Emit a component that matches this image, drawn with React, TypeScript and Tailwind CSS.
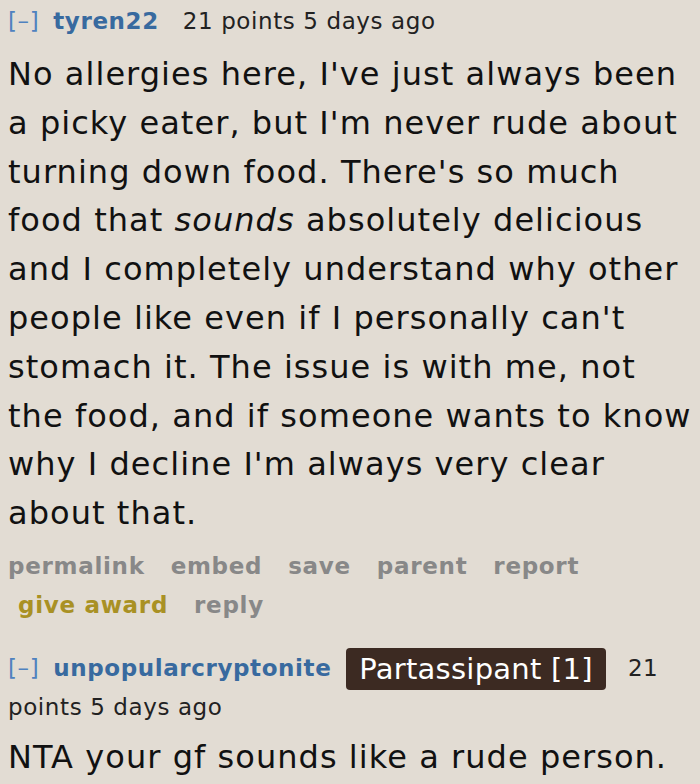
import React from "react";

const font = "font-['Verdana','DejaVu_Sans',sans-serif]";

function Header({ user, flair }: { user: string; flair?: string }) {
  return (
    <div className="text-[23px] leading-[38px] tracking-[0.6px] text-[#222]">
      <span className="text-[#4f82bf] mr-[14px]">[–]</span>
      <span className="font-bold text-[#386a9f] mr-[15px]">{user}</span>
      {flair && (
        <span className="inline-block bg-[#3c2a22] text-white text-[29px] leading-[42px] tracking-[0.25px] px-[13px] rounded-[4px] mr-[22px] align-middle -my-[2px]">
          {flair}
        </span>
      )}
      <span className={flair ? "" : "ml-[9px]"}>21 points 5 days ago</span>
    </div>
  );
}

export default function App() {
  return (
    <div className={`min-h-screen bg-[#e2dcd3] px-[8px] pt-[2px] ${font}`}>
      <Header user="tyren22" />
      <div className="text-[32px] leading-[48.8px] tracking-[1.05px] text-[#111] mt-[10px] -mr-[6px]">
        No allergies here, I've just always been a picky eater, but I'm never rude about turning down food. There's so much food that <em>sounds</em> absolutely delicious and I completely understand why other people like even if I personally can't stomach it. The issue is with me, not the food, and if someone wants to know why I decline I'm always very clear about that.
      </div>
      <div className="flex flex-wrap gap-x-[26px] text-[23px] leading-[39px] tracking-[0.7px] font-bold text-[#888] mt-[9px]">
        <span>permalink</span>
        <span>embed</span>
        <span>save</span>
        <span>parent</span>
        <span>report</span>
        <span className="text-[#a99124] ml-[10px]">give award</span>
        <span>reply</span>
      </div>
      <div className="mt-[24px]">
        <Header user="unpopularcryptonite" flair="Partassipant [1]" />
      </div>
      <div className="text-[32px] leading-[48.8px] tracking-[1.05px] text-[#111] mt-[7px]">
        NTA your gf sounds like a rude person.
      </div>
    </div>
  );
}
